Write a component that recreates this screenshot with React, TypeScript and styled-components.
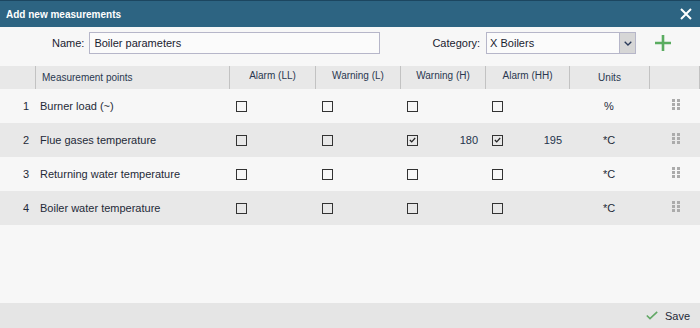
import React from "react";
import styled, { createGlobalStyle } from "styled-components";

const GlobalStyle = createGlobalStyle`
  html, body { margin: 0; padding: 0; }
  body {
    background: #f7f7f7;
    font-family: "Liberation Sans", Arial, sans-serif;
    color: #1f2a38;
  }
  * { box-sizing: border-box; }
`;

const COLS = "35px 194px 86px 85px 85px 84px 80px 51px";

const Dialog = styled.div`
  width: 700px;
  height: 328px;
  display: flex;
  flex-direction: column;
  background: #f7f7f7;
  overflow: hidden;
`;

const TitleBar = styled.div`
  height: 27px;
  flex: none;
  background: #2d6482;
  border-top: 1px solid #1c4660;
  display: flex;
  align-items: center;
  justify-content: space-between;
  padding: 0 8px 0 6px;
`;

const Title = styled.div`
  color: #ffffff;
  font-size: 10px;
  font-weight: bold;
`;

const CloseButton = styled.button`
  border: 0;
  background: none;
  padding: 0;
  width: 12px;
  height: 12px;
  display: flex;
  cursor: pointer;
`;

const Body = styled.div`
  flex: 1;
  display: flex;
  flex-direction: column;
`;

const FormRow = styled.div`
  display: flex;
  align-items: center;
  height: 22px;
  margin-top: 5px;
  padding-left: 52px;
`;

const Label = styled.label<{ $gapLeft?: number }>`
  font-size: 11px;
  color: #1a2230;
  margin-left: ${(p) => p.$gapLeft ?? 0}px;
  margin-right: 5px;
`;

const TextInput = styled.input`
  width: 291px;
  height: 22px;
  border: 1px solid #b6b6c9;
  background: #fbfbfb;
  padding: 0 4px;
  font-family: "Liberation Sans", Arial, sans-serif;
  font-size: 11px;
  color: #1a2230;
  outline: none;
`;

const SelectBox = styled.div`
  width: 150px;
  height: 22px;
  border: 1px solid #b6b6c9;
  background: #fbfbfb;
  display: flex;
  align-items: stretch;
  margin-left: 1px;
`;

const SelectValue = styled.div`
  flex: 1;
  font-size: 11px;
  display: flex;
  align-items: center;
  padding-left: 3px;
  color: #1a2230;
`;

const SelectArrow = styled.div`
  width: 16px;
  background: #d6d6d6;
  border-left: 1px solid #b6b6c9;
  display: flex;
  align-items: center;
  justify-content: center;
`;

const AddButton = styled.button`
  border: 0;
  background: none;
  padding: 0;
  margin-left: 19px;
  width: 16px;
  height: 16px;
  display: flex;
  cursor: pointer;
`;

const Table = styled.div`
  margin-top: 12px;
  display: flex;
  flex-direction: column;
`;

const HeaderRow = styled.div`
  display: grid;
  grid-template-columns: ${COLS};
  height: 23px;
  background: #e8e8e8;
`;

const HeaderCell = styled.div<{ $align?: "left" | "center"; $first?: boolean; $last?: boolean; $raised?: boolean }>`
  font-size: 10px;
  color: #2a3850;
  display: flex;
  align-items: center;
  justify-content: ${(p) => (p.$align === "left" ? "flex-start" : "center")};
  padding-left: ${(p) => (p.$align === "left" ? "6px" : "0")};
  padding-bottom: ${(p) => (p.$raised ? "4px" : "0")};
  border-left: ${(p) => (p.$first ? "0" : "1px solid #c2c2c2")};
  border-right: ${(p) => (p.$last ? "1px solid #c2c2c2" : "0")};
`;

const Row = styled.div<{ $shade: boolean }>`
  display: grid;
  grid-template-columns: ${COLS};
  height: 34px;
  background: ${(p) => (p.$shade ? "#e8e8e8" : "#f7f7f7")};
  font-size: 11px;
  color: #1f2a38;
`;

const NumCell = styled.div`
  display: flex;
  align-items: center;
  justify-content: flex-end;
  padding-right: 6px;
`;

const NameCell = styled.div`
  display: flex;
  align-items: center;
  padding-left: 5px;
`;

const LimitCell = styled.div`
  display: flex;
  align-items: center;
  justify-content: space-between;
  padding: 0 7px 0 7px;
`;

const UnitCell = styled.div`
  display: flex;
  align-items: center;
  justify-content: center;
`;

const HandleCell = styled.div`
  display: flex;
  justify-content: center;
  padding-top: 10px;
  padding-left: 2px;
`;

const Box = styled.span<{ $checked: boolean }>`
  width: 11px;
  height: 11px;
  border: 1px solid #333333;
  display: inline-flex;
  align-items: center;
  justify-content: center;
`;

const Value = styled.span`
  color: #24344c;
`;

const Footer = styled.div`
  height: 25px;
  flex: none;
  background: #e5e5e5;
  display: flex;
  align-items: center;
  justify-content: flex-end;
  padding-right: 10px;
`;

const SaveButton = styled.button`
  border: 0;
  background: none;
  padding: 0;
  display: flex;
  align-items: center;
  gap: 7px;
  font-family: "Liberation Sans", Arial, sans-serif;
  font-size: 11px;
  color: #1f2a38;
  cursor: pointer;
`;

type Limit = { checked: boolean; value?: string };
type Point = { name: string; limits: Limit[]; unit: string };

const points: Point[] = [
  { name: "Burner load (~)", limits: [{ checked: false }, { checked: false }, { checked: false }, { checked: false }], unit: "%" },
  {
    name: "Flue gases temperature",
    limits: [{ checked: false }, { checked: false }, { checked: true, value: "180" }, { checked: true, value: "195" }],
    unit: "*C",
  },
  { name: "Returning water temperature", limits: [{ checked: false }, { checked: false }, { checked: false }, { checked: false }], unit: "*C" },
  { name: "Boiler water temperature", limits: [{ checked: false }, { checked: false }, { checked: false }, { checked: false }], unit: "*C" },
];

const Check = ({ checked }: { checked: boolean }) => (
  <Box $checked={checked}>
    {checked && (
      <svg width="7" height="6" viewBox="0 0 7 6">
        <path d="M0.8 3 L2.7 4.8 L6.2 1" fill="none" stroke="#222" strokeWidth="1.2" />
      </svg>
    )}
  </Box>
);

const Handle = () => (
  <svg width="8" height="11" viewBox="0 0 8 11">
    {[0, 4, 8].map((y) =>
      [0, 5].map((x) => <rect key={`${x}-${y}`} x={x} y={y} width="3" height="3" fill="#ababab" />)
    )}
  </svg>
);

export default function App() {
  return (
    <>
      <GlobalStyle />
      <Dialog>
        <TitleBar>
          <Title>Add new measurements</Title>
          <CloseButton aria-label="Close">
            <svg width="12" height="12" viewBox="0 0 12 12">
              <path d="M1 1 L11 11 M11 1 L1 11" stroke="#ffffff" strokeWidth="2" />
            </svg>
          </CloseButton>
        </TitleBar>
        <Body>
          <FormRow>
            <Label>Name:</Label>
            <TextInput defaultValue="Boiler parameters" />
            <Label $gapLeft={52}>Category:</Label>
            <SelectBox>
              <SelectValue>X Boilers</SelectValue>
              <SelectArrow>
                <svg width="8" height="5" viewBox="0 0 8 5">
                  <path d="M0.7 0.7 L4 4 L7.3 0.7" fill="none" stroke="#2a3a5a" strokeWidth="1.3" />
                </svg>
              </SelectArrow>
            </SelectBox>
            <AddButton aria-label="Add">
              <svg width="16" height="16" viewBox="0 0 16 16">
                <path d="M8 0 V16 M0 8 H16" stroke="#5aac60" strokeWidth="2.6" />
              </svg>
            </AddButton>
          </FormRow>
          <Table>
            <HeaderRow>
              <HeaderCell $first />
              <HeaderCell $align="left">Measurement points</HeaderCell>
              <HeaderCell $raised>Alarm (LL)</HeaderCell>
              <HeaderCell $raised>Warning (L)</HeaderCell>
              <HeaderCell $raised>Warning (H)</HeaderCell>
              <HeaderCell $raised>Alarm (HH)</HeaderCell>
              <HeaderCell>Units</HeaderCell>
              <HeaderCell $last />
            </HeaderRow>
            {points.map((p, i) => (
              <Row key={p.name} $shade={i % 2 === 1}>
                <NumCell>{i + 1}</NumCell>
                <NameCell>{p.name}</NameCell>
                {p.limits.map((l, j) => (
                  <LimitCell key={j}>
                    <Check checked={l.checked} />
                    {l.value && <Value>{l.value}</Value>}
                  </LimitCell>
                ))}
                <UnitCell>{p.unit}</UnitCell>
                <HandleCell>
                  <Handle />
                </HandleCell>
              </Row>
            ))}
          </Table>
        </Body>
        <Footer>
          <SaveButton>
            <svg width="12" height="9" viewBox="0 0 12 9">
              <path d="M0.8 4.5 L4 7.6 L11.2 0.8" fill="none" stroke="#62a866" strokeWidth="1.6" />
            </svg>
            Save
          </SaveButton>
        </Footer>
      </Dialog>
    </>
  );
}
